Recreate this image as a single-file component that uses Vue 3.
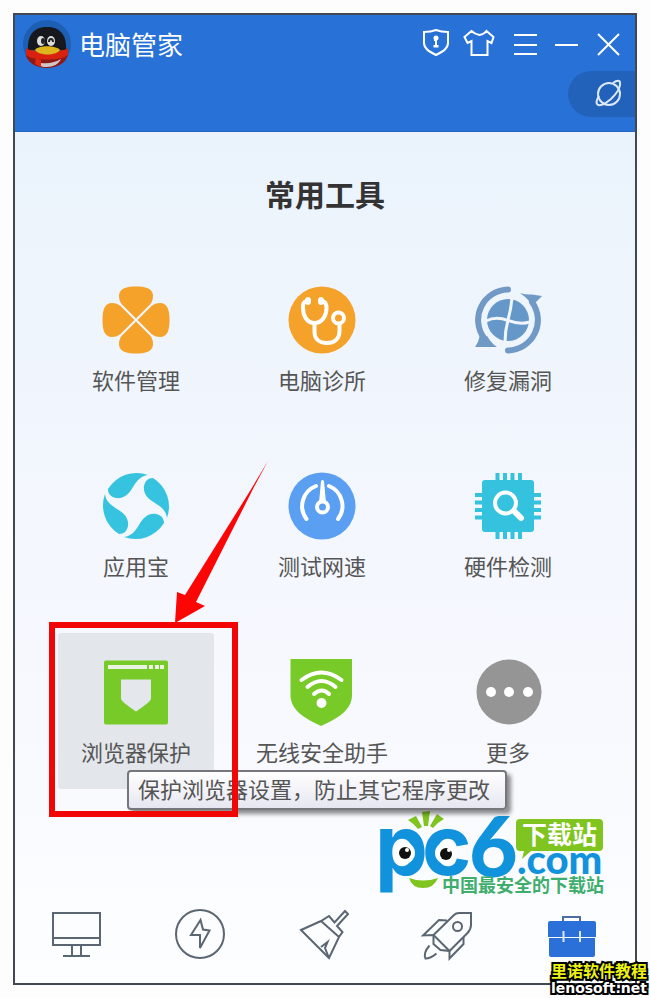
<template>
  <div class="page">
    <div class="window">
      <header class="header">
        <div class="title-bar">
          <svg class="avatar" viewBox="0 0 48 48" aria-hidden="true">
            <circle cx="24" cy="24" r="24" fill="#1d60b3" />
            <path d="M5 30C4 14 12 7 24 7s20 7 19 23z" fill="#16181d" />
            <path d="M3 28c5 5 37 5 42 0v7c-2 8-11 13-21 13S5 43 3 36z" fill="#8e1a17" />
            <path d="M3 28c5 5 37 5 42 0v7c-6 6-36 6-42 0z" fill="#d8220f" />
            <path d="M13 38l5 2v7l-6-3z" fill="#e3260f" />
            <path d="M18 43c8 1 15-1 20-4-2 5-8 8-14 8-3 0-5 0-6-1z" fill="#d3c4c6" />
            <path d="M12 30c3-5 21-5 25 0-4 6-21 6-25 0z" fill="#dfb51d" />
            <ellipse cx="18" cy="21" rx="4" ry="5" fill="#ddd" />
            <ellipse cx="28" cy="21" rx="4" ry="5" fill="#ddd" />
            <ellipse cx="20" cy="21" rx="2" ry="3" fill="#222" />
            <path d="M26 22c0-4 4-4 4 0" fill="none" stroke="#222" stroke-width="2" />
          </svg>
          <h1 class="app-name">电脑管家</h1>
          <div class="window-actions">
            <button type="button" class="icon-btn" aria-label="隐私保护">
              <svg viewBox="0 0 32 32">
                <path d="M4 4q7 0 12-2q5 2 12 2v11c0 6-6 9-12 12c-6-3-12-6-12-12z" />
                <circle cx="16" cy="10" r="2.5" fill="#fff" stroke="none" />
                <path d="M14 11h3v6h1.5v2.5h-5V17H15v-4h-1z" fill="#fff" stroke="none" />
              </svg>
            </button>
            <button type="button" class="icon-btn" aria-label="换肤">
              <svg viewBox="0 0 32 32">
                <path d="M8.500 3L1.500 9l3 6 4-2v14h16V13l4 2 2-6-7-6q-2 3-7 4-5-1-8-4z" />
              </svg>
            </button>
            <button type="button" class="icon-btn" aria-label="菜单">
              <svg viewBox="0 0 32 32"><path d="M8 7h23M8 17h23M8 26h23" /></svg>
            </button>
            <button type="button" class="icon-btn" aria-label="最小化">
              <svg viewBox="0 0 32 32"><path d="M6 17h23" /></svg>
            </button>
            <button type="button" class="icon-btn" aria-label="关闭">
              <svg viewBox="0 0 32 32"><path d="M6 6l21 21M27 6L6 27" /></svg>
            </button>
          </div>
        </div>
        <button type="button" class="planet-btn" aria-label="浏览器">
          <svg viewBox="0 0 32 32">
            <circle cx="16" cy="16" r="11" />
            <path d="M20 5c4-3 7-3 7 0 1 5-4 11-9 16-6 5-12 8-14 5-1-2 0-5 2-8" />
          </svg>
        </button>
      </header>

      <main class="content">
        <h2 class="section-title">常用工具</h2>
        <ul class="tools">
          <li
            v-for="tool in tools"
            :key="tool.id"
            class="tool-item"
            :class="{ active: tool.id === activeTool }"
          >
            <button
              type="button"
              class="tool"
              :aria-describedby="tool.tip ? 'tool-tip' : undefined"
              @click="activeTool = tool.id"
            >
              <svg v-if="tool.id === 'software'" class="tool-icon" viewBox="0 0 68 68">
                <path
                  v-for="angle in [0, 90, 180, 270]"
                  :key="angle"
                  d="M34 32.5L20 18.5Q17 15 17 10C17 2 25 .5 34 .5S51 2 51 10Q51 15 48 18.5Z"
                  fill="#f5a22b"
                  :transform="`rotate(${angle} 34 34)`"
                />
              </svg>
              <svg v-else-if="tool.id === 'clinic'" class="tool-icon" viewBox="0 0 68 68">
                <circle cx="34" cy="34" r="33.5" fill="#f5a22b" />
                <g fill="none" stroke="#fff" stroke-width="4" stroke-linecap="round">
                  <path d="M19 15c-4 1-4 3-4 7 0 8 4 15 11.5 15S38.500 30 38.500 22c0-4-1-6-4-7" />
                  <path d="M26.500 38v8c0 7 5 11 12 11 8 0 13-4 13-12v-6" />
                  <circle cx="50.5" cy="32" r="5.5" />
                </g>
                <ellipse cx="20" cy="15" rx="3" ry="4" fill="#fff" />
                <ellipse cx="33" cy="15" rx="3" ry="4" fill="#fff" />
              </svg>
              <svg v-else-if="tool.id === 'repair'" class="tool-icon" viewBox="0 0 68 68">
                <g fill="none" stroke="#7099c5" stroke-width="6">
                  <path d="M34 3.5A30.5 30.5 0 0 0 10 52" stroke-linecap="round" />
                  <path d="M34 64.5A30.5 30.5 0 0 0 58 16" stroke-linecap="round" />
                </g>
                <path d="M6 49l-2 7-3 5h22q-5-3-10-11z" fill="#7099c5" />
                <path d="M46 7q6 2 12 1.500L68 10l-6 6v4l-6-4q-4-5-10-9z" fill="#7099c5" />
                <circle cx="34" cy="34" r="21" fill="#6598c9" />
                <path
                  d="M38 12q-1 11-4 22t-3 22M12 35q10-5 22-.5T56 36"
                  fill="none"
                  stroke="#f1f6fd"
                  stroke-width="3"
                />
              </svg>
              <svg v-else-if="tool.id === 'store'" class="tool-icon" viewBox="0 0 68 68">
                <path
                  v-for="angle in [0, 90, 180, 270]"
                  :key="angle"
                  d="M6 17A33.5 33.5 0 0 1 46 3C38 4 35 9 31 15C27 22 22 27 14 26C9 25 6 22 6 17Z"
                  fill="#36c3df"
                  :transform="`rotate(${angle} 34 34)`"
                />
              </svg>
              <svg v-else-if="tool.id === 'speed'" class="tool-icon" viewBox="0 0 68 68">
                <circle cx="34" cy="34" r="33.5" fill="#5a9ff2" />
                <g fill="none" stroke="#fff" stroke-width="4">
                  <path
                    d="M18.500 47A21.5 21.5 0 0 1 28 14M41 14A21.5 21.5 0 0 1 50 47"
                    stroke-linecap="round"
                  />
                  <circle cx="34.5" cy="35" r="5.5" />
                </g>
                <path d="M33 9q1.500-2 3 0l2 22h-7z" fill="#fff" />
              </svg>
              <svg v-else-if="tool.id === 'hardware'" class="tool-icon" viewBox="0 0 68 68">
                <rect x="8" y="8" width="52" height="52" rx="3" fill="#35c2de" />
                <path
                  d="M23.500 1v66M31 1v66M38.500 1v66M46 1v66M1 23h66M1 30.500h66M1 38h66M1 45.500h66"
                  stroke="#35c2de"
                  stroke-width="4"
                />
                <circle cx="31.5" cy="31" r="10.5" fill="none" stroke="#fff" stroke-width="4" />
                <path d="M40 39l7 7" stroke="#fff" stroke-width="6" stroke-linecap="round" />
              </svg>
              <svg v-else-if="tool.id === 'browser'" class="tool-icon" viewBox="0 0 68 68">
                <rect x="2" y="2.5" width="64" height="64" rx="2" fill="#78ca28" />
                <path d="M6 7h39v4H6zM47 7h4v4h-4zM53 7h4v4h-4zM58 7h4v4h-4z" fill="#e9f2e3" />
                <path d="M19 21.500h30V41q-1 3-15 12.500Q20 44 19 41z" fill="#e4e7eb" />
              </svg>
              <svg v-else-if="tool.id === 'wifi'" class="tool-icon" viewBox="0 0 68 68">
                <path d="M2.500 1H64v36c0 15-14 23-31 31C16 60 2.500 52 2.500 37z" fill="#78ca28" />
                <circle cx="33.5" cy="45" r="5" fill="#fff" />
                <g fill="none" stroke="#fff" stroke-width="4" stroke-linecap="round">
                  <path d="M26 36q8-7 15 0M19.500 29q14-12 28 0M13.500 22q20-15 40 0" />
                </g>
              </svg>
              <svg v-else class="tool-icon" viewBox="0 0 68 68">
                <circle cx="35" cy="34" r="32.5" fill="#959595" />
                <circle v-for="x in [17, 35, 54]" :key="x" :cx="x" cy="34" r="5" fill="#fff" />
              </svg>
              <span class="tool-name">{{ tool.name }}</span>
            </button>
            <template v-if="tool.tip">
              <div id="tool-tip" class="tooltip" role="tooltip">{{ tool.tip }}</div>
              <div class="highlight"></div>
              <svg class="arrow" viewBox="0 0 96 164" aria-hidden="true">
                <path d="M94 0L80 26 22 141l9 4L1 162l2-31 8 3L76 30z" fill="#fb0505" />
              </svg>
            </template>
          </li>
        </ul>

        <svg class="pc6" viewBox="0 0 228 86" role="img" aria-label="pc6下载站">
          <g fill="#1192dc">
            <text class="pc6-letter" x="-5" y="65">p</text>
            <text class="pc6-letter" x="42" y="65">c</text>
            <text class="pc6-digit" x="89" y="67">6</text>
          </g>
          <circle cx="24" cy="43" r="11" fill="#fff" />
          <circle cx="66" cy="43" r="11" fill="#fff" />
          <circle cx="25" cy="43" r="6" fill="#111" />
          <circle cx="66" cy="44" r="6" fill="#111" />
          <circle cx="27" cy="40" r="2" fill="#fff" />
          <circle cx="69" cy="40" r="2" fill="#fff" />
          <g fill="#7fc41f">
            <path d="M28 10l8-4 6 11-4 2q-5-6-10-9z" />
            <path d="M42 2l8-1-2 15h-4z" />
            <path d="M57 4l7 5q-6 3-11 9l-3-2z" />
            <path d="M29 68q14 5 29 0-4 10-15 10T29 68z" />
            <path d="M140 9h79q4 0 4 4v24q0 4-4 4h-68l-9 8 2-8h-4q-4 0-4-4V13q0-4 4-4z" />
          </g>
          <text class="pc6-badge" x="142" y="34" fill="#fff">下载站</text>
          <text class="pc6-com" x="137" y="64" fill="#1192dc">.com</text>
          <text class="pc6-slogan" x="62" y="82" fill="#3fae6d">中国最安全的下载站</text>
        </svg>
      </main>

      <nav class="tabs">
        <button
          v-for="tab in tabs"
          :key="tab.id"
          type="button"
          class="tab"
          :aria-label="tab.name"
          @click="activeTab = tab.id"
        >
          <svg v-if="tab.id === 'home'" class="tab-icon" viewBox="0 0 56 56">
            <path d="M4 7h47v32H4zM4 32h47M23 39v11M32 39v11M14 50h27" />
          </svg>
          <svg v-else-if="tab.id === 'boost'" class="tab-icon" viewBox="0 0 56 56">
            <circle cx="27" cy="28" r="24" />
            <path d="M27.500 14L18 29h9v13l9.500-17.500-6.500-1z" />
          </svg>
          <svg v-else-if="tab.id === 'clean'" class="tab-icon" viewBox="0 0 56 56">
            <path d="M4 24l20-9 8-5 5.500 6.500L48 5l3 3-11 12 5.500 6-3.500 5-10 21zM24 15l18 16" />
            <path d="M24 41l6.500-5-2.500 6 4 10" />
          </svg>
          <svg v-else-if="tab.id === 'rocket'" class="tab-icon" viewBox="0 0 56 56">
            <path d="M50 7H38q-3 0-5 2L12.500 29l16 16 18-18q3.500-4 3.500-8z" />
            <path d="M26 14.500l-8-.5L2 29.500l10.500-.5v9l7 6 9 1v7.500l14-14.500v-7" />
            <circle cx="36.5" cy="20.5" r="4.5" />
            <path d="M8.500 39.500Q2 47 4.500 52.500q5 0 11-5" />
          </svg>
          <svg v-else class="tab-icon tab-icon-solid" viewBox="0 0 56 56">
            <path d="M5 15h44q2 0 2 2v14H3V17q0-2 2-2z" />
            <path d="M4 32h46v17q0 2-2 2H6q-2 0-2-2z" />
            <path class="line" d="M18 15v-4h17v4" />
            <path class="clasp" d="M18.500 25v11M35 25v11" />
          </svg>
        </button>
      </nav>
    </div>

    <div class="source">
      <span class="source-name">里诺软件教程</span>
      <span class="source-site">lenosoft.net</span>
    </div>
  </div>
</template>

<script setup>
import { ref } from 'vue';

const tools = [
  { id: 'software', name: '软件管理' },
  { id: 'clinic', name: '电脑诊所' },
  { id: 'repair', name: '修复漏洞' },
  { id: 'store', name: '应用宝' },
  { id: 'speed', name: '测试网速' },
  { id: 'hardware', name: '硬件检测' },
  { id: 'browser', name: '浏览器保护', tip: '保护浏览器设置，防止其它程序更改' },
  { id: 'wifi', name: '无线安全助手' },
  { id: 'more', name: '更多' },
];

const tabs = [
  { id: 'home', name: '首页' },
  { id: 'boost', name: '加速' },
  { id: 'clean', name: '清理' },
  { id: 'rocket', name: '小火箭' },
  { id: 'toolbox', name: '工具箱' },
];

const activeTool = ref('browser');
const activeTab = ref('toolbox');
</script>

<style>
body {
  background: #fdfdfd;
}
</style>

<style scoped>
.page {
  position: relative;
  padding: 13px;
  font-family: 'Noto Sans CJK SC', sans-serif;
  color: #555;
}

.window {
  border: 2px solid #414753;
  background: linear-gradient(#eaf3fc 12%, #f2f6fd 45%, #f7f9fe 75%, #fdfeff);
}

button {
  border: none;
  padding: 0;
  background: transparent;
  font: inherit;
  color: inherit;
  cursor: pointer;
}

svg {
  display: block;
}

.header {
  display: flex;
  flex-direction: column;
  padding-bottom: 14px;
  background: #2871d7;
  border-bottom: 1px solid #2463c0;
}

.title-bar {
  display: flex;
  align-items: center;
  height: 54px;
  padding: 2px 11px 0 8px;
}

.avatar {
  width: 48px;
  height: 48px;
}

.app-name {
  margin: 0 0 0 8px;
  font-size: 26px;
  font-weight: 400;
  line-height: 36px;
  color: #fff;
}

.window-actions {
  display: flex;
  gap: 11px;
  margin-left: auto;
}

.icon-btn svg,
.planet-btn svg {
  width: 32px;
  height: 32px;
  fill: none;
  stroke: #fff;
  stroke-width: 2;
}

.planet-btn {
  display: flex;
  align-items: center;
  align-self: flex-end;
  width: 67px;
  height: 46px;
  padding-left: 25px;
  border-radius: 23px 0 0 23px;
  background: #2262bb;
}

.planet-btn svg {
  stroke: #dce9fa;
}

.content {
  padding-top: 41px;
}

.section-title {
  margin: 0 0 48px;
  font-size: 30px;
  font-weight: 700;
  line-height: 40px;
  text-align: center;
  color: #333;
}

.tools {
  display: grid;
  grid-template-columns: repeat(3, 1fr);
  gap: 30px;
  list-style: none;
  margin: 0;
  padding: 0 49px 0 43px;
}

.tool-item {
  position: relative;
}

.tool-item.active {
  z-index: 1;
}

.tool {
  display: flex;
  flex-direction: column;
  align-items: center;
  width: 100%;
  min-height: 156px;
  padding-top: 25px;
  border-radius: 3px;
}

.active .tool {
  background: #e3e6eb;
}

.tool-icon {
  width: 68px;
  height: 68px;
}

.tool-name {
  margin-top: 10px;
  font-size: 22px;
  line-height: 30px;
  white-space: nowrap;
}

.tooltip {
  position: absolute;
  top: 137px;
  left: 69px;
  padding: 0 15px 4px 9px;
  border: 2px solid #77777b;
  border-radius: 4px;
  background: linear-gradient(#fff, #e6e6f1);
  box-shadow: 4px 4px 4px rgba(0, 0, 0, 0.45);
  font-size: 22px;
  line-height: 32px;
  white-space: nowrap;
}

.highlight {
  position: absolute;
  inset: -11px -24px -28px -9px;
  border: 6px solid #f20505;
  pointer-events: none;
}

.arrow {
  position: absolute;
  top: -172px;
  left: 116px;
  width: 96px;
  height: 164px;
  pointer-events: none;
}

.pc6 {
  width: 228px;
  height: 86px;
  margin: 21px 27px 0 auto;
  overflow: visible;
}

.pc6-letter {
  font-family: Inter, sans-serif;
  font-size: 84px;
  font-weight: 700;
}

.pc6-digit {
  font-family: Lato, sans-serif;
  font-size: 84px;
  font-weight: 900;
}

.pc6-badge {
  font-size: 25px;
  font-weight: 700;
}

.pc6-com {
  font-family: Lato, sans-serif;
  font-size: 40px;
  font-weight: 900;
}

.pc6-slogan {
  font-size: 18px;
  font-weight: 700;
}

.tabs {
  display: flex;
  height: 76px;
  padding-bottom: 11px;
}

.tab {
  display: flex;
  flex: 1;
  align-items: center;
  justify-content: center;
}

.tab-icon {
  width: 56px;
  height: 56px;
  fill: none;
  stroke: #5b6673;
  stroke-width: 2;
}

.tab-icon-solid {
  fill: #2b70d8;
  stroke: none;
}

.tab-icon-solid .line {
  fill: none;
  stroke: #4b6ea6;
}

.tab-icon-solid .clasp {
  stroke: #dbe8fa;
}

.source {
  position: absolute;
  right: 3px;
  bottom: 1px;
  display: flex;
  flex-direction: column;
  align-items: center;
  font-weight: 700;
  -webkit-text-stroke: 4px #000;
  paint-order: stroke fill;
}

.source-name {
  font-size: 16px;
  line-height: 18px;
  color: #ecf213;
}

.source-site {
  font-family: 'DejaVu Sans', sans-serif;
  font-size: 14px;
  line-height: 18px;
  color: #fff;
}
</style>
